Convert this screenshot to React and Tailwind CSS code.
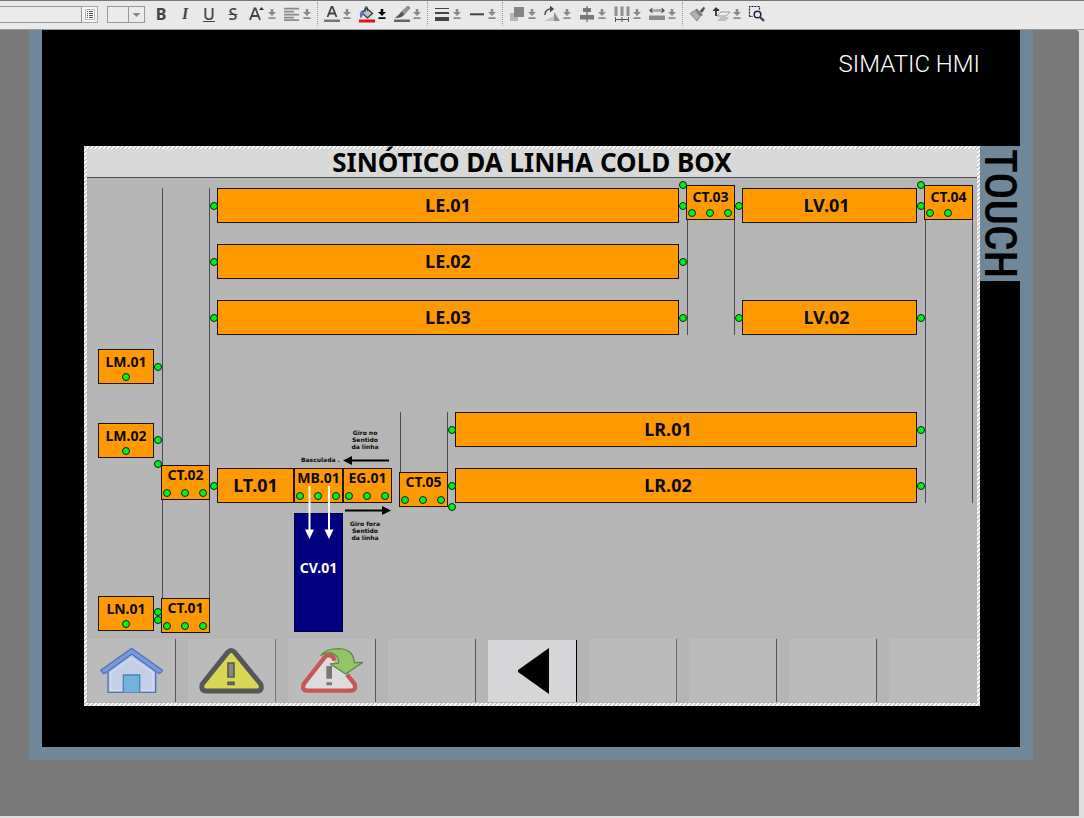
import React from "react";

const SMALL = "text-[14px] leading-[16px]";

const rails = [
  "left-[75px] top-[10px] h-[420px]",
  "left-[600px] top-[7px] h-[150px]",
  "left-[838px] top-[7px] h-[318px]",
  "left-[313px] top-[234px] h-[90px]",
];

const conveyors = [
  { name: "LE.01", at: "left-[130px] top-[10px] w-[462px]" },
  { name: "LE.02", at: "left-[130px] top-[66px] w-[462px]" },
  { name: "LE.03", at: "left-[130px] top-[122px] w-[462px]" },
  { name: "LV.01", at: "left-[655px] top-[10px] w-[175px] pr-[6px]" },
  { name: "LV.02", at: "left-[655px] top-[122px] w-[175px] pr-[6px]" },
  { name: "LR.01", at: "left-[368px] top-[234px] w-[462px] pr-[36px]" },
  { name: "LR.02", at: "left-[368px] top-[290px] w-[462px] pr-[36px]" },
  { name: "LT.01", at: "left-[130px] top-[290px] w-[77px]" },
];

const stations = [
  { name: "CT.03", dots: 3, at: "left-[599px] top-[7px] w-[49px] pt-[3px]" },
  { name: "CT.04", dots: 2, at: "left-[837px] top-[7px] w-[49px] pt-[3px]" },
  { name: "LM.01", dots: 1, at: "left-[11px] top-[171px] w-[56px] pt-[4px]" },
  { name: "LM.02", dots: 1, at: "left-[11px] top-[245px] w-[56px] pt-[4px]" },
  { name: "LN.01", dots: 1, at: "left-[11px] top-[418px] w-[56px] pt-[4px]" },
  { name: "CT.02", dots: 3, at: "left-[74px] top-[287px] w-[49px] pt-[1px]" },
  { name: "CT.01", dots: 3, at: "left-[74px] top-[420px] w-[49px] pt-[1px]" },
  { name: "MB.01", dots: 3, at: "left-[207px] top-[290px] w-[49px] pt-[1px]" },
  { name: "EG.01", dots: 3, at: "left-[256px] top-[290px] w-[49px] pt-[1px]" },
  { name: "CT.05", dots: 3, at: "left-[312px] top-[294px] w-[49px] pt-[1px]" },
];

const sensors = [
  "left-[123px] top-[24px]",
  "left-[123px] top-[80px]",
  "left-[123px] top-[136px]",
  "left-[592px] top-[3px]",
  "left-[592px] top-[24px]",
  "left-[592px] top-[80px]",
  "left-[592px] top-[136px]",
  "left-[648px] top-[24px]",
  "left-[648px] top-[136px]",
  "left-[830px] top-[3px]",
  "left-[830px] top-[24px]",
  "left-[830px] top-[136px]",
  "left-[830px] top-[248px]",
  "left-[830px] top-[304px]",
  "left-[67px] top-[185px]",
  "left-[67px] top-[258px]",
  "left-[67px] top-[282px]",
  "left-[123px] top-[304px]",
  "left-[67px] top-[430px]",
  "left-[67px] top-[438px]",
  "left-[361px] top-[248px]",
  "left-[361px] top-[304px]",
  "left-[361px] top-[325px]",
];

function Dot({ className = "" }) {
  return <span className={`size-2 rounded-full border border-[#062a06] bg-[#06ee1c] ${className}`} />;
}

function Conveyor({ name, at }) {
  return (
    <div className={`absolute flex h-[35px] items-center justify-center border border-[#1c1208] bg-[#ff9900] pb-[2px] text-[18px] leading-[20px] ${at}`}>
      {name}
    </div>
  );
}

function Station({ name, dots, at }) {
  return (
    <div className={`absolute flex h-[35px] flex-col items-center justify-between border border-[#1c1208] bg-[#ff9900] pb-[2px] ${at}`}>
      <span className={SMALL}>{name}</span>
      <span className={dots === 1 ? "flex" : "flex w-full gap-[10px] pl-px"}>
        {Array.from({ length: dots }, (_, i) => (
          <Dot key={i} />
        ))}
      </span>
    </div>
  );
}

function Diagram() {
  return (
    <div className="relative h-[461px] bg-[#b5b5b5] font-bold text-[#0c0804]">
      {rails.map((r) => (
        <div key={r} className={`absolute w-[48px] border-x border-[#4a4a58] ${r}`} />
      ))}
      {conveyors.map((c) => (
        <Conveyor key={c.name} {...c} />
      ))}
      {stations.map((s) => (
        <Station key={s.name} {...s} />
      ))}
      {sensors.map((s) => (
        <Dot key={s} className={`absolute ${s}`} />
      ))}

      <div className={`absolute left-[207px] top-[335px] flex h-[119px] w-[49px] justify-center border border-[#00003a] bg-[#000080] pt-[46px] text-white ${SMALL}`}>
        CV.01
      </div>

      <p className="absolute left-[248px] top-[251px] w-[60px] text-center font-['DejaVu_Sans',sans-serif] text-[6px] leading-[7px]">
        Giro no
        <br />
        Sentido
        <br />
        da linha
      </p>
      <p className="absolute left-[214px] top-[278px] whitespace-nowrap font-['DejaVu_Sans',sans-serif] text-[6px] leading-[7px]">Basculada .</p>
      <p className="absolute left-[248px] top-[342px] w-[60px] text-center font-['DejaVu_Sans',sans-serif] text-[6px] leading-[7px]">
        Giro fora
        <br />
        Sentido
        <br />
        da linha
      </p>

      <svg className="absolute left-[256px] top-[277px]" width="46" height="10" viewBox="0 0 46 10" aria-hidden="true">
        <path d="M8 5.5H46" stroke="#000" strokeWidth="2" />
        <path d="M0 5.5L9 1V10Z" fill="#000" />
      </svg>
      <svg className="absolute left-[258px] top-[327px]" width="46" height="10" viewBox="0 0 46 10" aria-hidden="true">
        <path d="M0 5.5H38" stroke="#000" strokeWidth="2" />
        <path d="M46 5.5L37 1V10Z" fill="#000" />
      </svg>
      <svg className="absolute left-[217px] top-[308px]" width="31" height="54" viewBox="0 0 31 54" aria-hidden="true">
        <path d="M5.5 0V46M25 0V46" stroke="#fff" strokeWidth="2" />
        <path d="M1 43.5H10L5.5 53ZM20.5 43.5H29.5L25 53Z" fill="#fff" />
      </svg>
    </div>
  );
}

function HouseIcon() {
  return (
    <svg width="63" height="47" viewBox="54 57 189 141" aria-hidden="true">
      <path d="M78 130L149 78L221 130V193H78Z" fill="#b7c6e2" stroke="#4e74b4" strokeWidth="4" />
      <path d="M86 134L149 90L213 134V187H86Z" fill="#c2cfe4" stroke="#d5def0" strokeWidth="4" />
      <path d="M124 193V141H173V193" fill="#72b2dc" stroke="#4583b8" strokeWidth="4" />
      <path d="M149 61L242 127L233 137L221 130L149 78L78 130L66 137L56 127Z" fill="#7a9bd8" stroke="#4f78be" strokeWidth="4" strokeLinejoin="round" />
    </svg>
  );
}

function WarningIcon() {
  return (
    <svg width="67" height="47" viewBox="354 57 201 141" aria-hidden="true">
      <path d="M443 73Q453 62 464 73L542 168Q549 189 531 189H379Q361 189 367 168Z" fill="#d9d654" stroke="#575757" strokeWidth="15" strokeLinejoin="round" />
      <path d="M444 105H462V147H444ZM444 163H462V169H444Z" fill="#8a8a7a" stroke="#5a5a58" strokeWidth="5" />
    </svg>
  );
}

function AckIcon() {
  return (
    <svg width="64" height="47" viewBox="660 57 192 141" aria-hidden="true">
      <path d="M745 82L672 173Q668 188 682 188H812Q829 188 825 173L796 136L762 100Z" fill="#dcdcdc" />
      <path d="M763 98Q760 80 745 82Q738 82 734 88L672 167Q663 188 684 188H810Q830 188 824 168L801 140" fill="none" stroke="#c95656" strokeWidth="13" />
      <path d="M739 114H756V152H739ZM739 163H756V172H739Z" fill="#777" />
      <path d="M723 82Q738 62 777 62Q821 64 823 104L848 103L797 138L751 108L776 105Q778 82 752 74Q735 73 723 82Z" fill="#93c566" stroke="#5d8b42" strokeWidth="4" strokeLinejoin="round" />
    </svg>
  );
}

function BackIcon() {
  return (
    <svg width="32" height="46" viewBox="0 0 32 46" aria-hidden="true">
      <path d="M31 0V46L0 24V22Z" fill="#000" />
    </svg>
  );
}

const navButtons = [
  { label: "Início", icon: <HouseIcon />, look: "border-r border-[#555] bg-[#bbbbbb]" },
  { label: "Alarmes", icon: <WarningIcon />, look: "border-r border-[#777] bg-[#bbbbbb]" },
  { label: "Reconhecer alarmes", icon: <AckIcon />, look: "border-r border-[#555] bg-[#bbbbbb]" },
  { label: "F4", look: "border-r border-[#555] bg-[#bbbbbb]" },
  { label: "Voltar", icon: <BackIcon />, look: "mt-px border-r border-black bg-[#d6d6d8] pl-1" },
  { label: "F6", look: "border-r border-[#666] bg-[#bbbbbb]" },
  { label: "F7", look: "border-r border-[#555] bg-[#bbbbbb]" },
  { label: "F8", look: "border-r border-[#555] bg-[#bbbbbb]" },
  { label: "F9", look: "bg-[#bbbbbb]" },
];

function DownMark({ dark }) {
  return (
    <svg width="10" height="14" viewBox="0 0 10 14" aria-hidden="true">
      <path d="M3.7 2H6.3V5H9L5 9L1 5H3.7ZM1.5 10.3H8.5V12H1.5Z" fill={dark ? "#000" : "#8a8a8a"} />
    </svg>
  );
}

function Tool({ label, children, menu = true, dark = false }) {
  return (
    <button type="button" aria-label={label} className="flex h-[22px] items-center">
      <svg width="20" height="20" viewBox="0 0 20 20" aria-hidden="true">
        {children}
      </svg>
      {menu && <DownMark dark={dark} />}
    </button>
  );
}

function Sep() {
  return <span className="-mr-px h-[24px] w-px border-l border-dotted border-[#999]" />;
}

function Toolbar() {
  const txt = "flex h-[22px] w-5 items-center justify-center text-[16px] leading-[20px] text-[#444]";
  return (
    <header className="flex h-[30px] items-center gap-[5px] border-y border-t-[#777] border-b-[#999] bg-[#e9e9e9] pb-[2px] font-['Noto_Sans',sans-serif]">
      <div className="flex h-[17px]">
        <input aria-label="Estilo" className="w-[82px] border border-l-0 border-[#999] bg-[#ebebeb] px-1 text-[11px]" />
        <button type="button" aria-label="Lista de estilos" className="flex w-4 items-center justify-center border border-l-0 border-[#aaa] bg-[#f4f4f4]">
          <svg width="10" height="11" viewBox="0 0 10 11" aria-hidden="true">
            <path d="M0.5 0.5H9.5V10.5H0.5Z" fill="#fff" stroke="#bbb" />
            <path d="M2 2.5H3M4 2.5H8M2 4.5H3M4 4.5H8M2 6.5H3M4 6.5H8M2 8.5H3M4 8.5H8" stroke="#555" />
          </svg>
        </button>
      </div>
      <div className="relative ml-[4px] flex h-[17px] w-[38px]">
        <select aria-label="Tamanho da fonte" className="w-full appearance-none border border-[#999] bg-[#ebebeb]">
          <option></option>
        </select>
        <svg className="pointer-events-none absolute right-0 top-0" width="17" height="17" viewBox="0 0 17 17" aria-hidden="true">
          <path d="M0.5 0V17M0 0.5H17M16.5 0V17M0 16.5H17" stroke="#999" />
          <path d="M4.5 7H12.5L8.5 11Z" fill="#888" />
        </svg>
      </div>
      <div className="flex gap-1 pl-px">
        <button type="button" aria-label="Negrito" className={`${txt} font-bold`}>B</button>
        <button type="button" aria-label="Itálico" className={`${txt} font-['Liberation_Serif',serif] font-bold italic`}>I</button>
        <button type="button" aria-label="Sublinhado" className={`${txt} font-medium underline`}>U</button>
        <button type="button" aria-label="Tachado" className={`${txt} font-medium line-through`}>S</button>
        <Tool label="Tamanho do texto">
          <path d="M3 16L7.5 4.5H8.5L13 16M4.8 12H11.2" fill="none" stroke="#444" strokeWidth="1.8" />
          <path d="M12 6L14.5 3L17 6Z" fill="#333" />
        </Tool>
      </div>
      <Tool label="Alinhamento">
        <path d="M2 4.7H17M2 7.7H12M2 10.7H17M2 13.7H12M2 16.2H17" stroke="#8a8a8a" strokeWidth="1.7" />
      </Tool>
      <Sep />
      <Tool label="Cor do texto">
        <path d="M5.5 13L9.5 3H10.5L14.5 13M7 9.5H13" fill="none" stroke="#444" strokeWidth="1.8" />
        <path d="M2 15.5H18V18H2Z" fill="#777" />
      </Tool>
      <Tool label="Cor de preenchimento" dark>
        <path d="M2 15.5H18V18.5H2Z" fill="#e8101a" />
        <path d="M9.5 4L15.5 9.5L10.5 14L5 9Z" fill="#b8c0d0" stroke="#333" strokeWidth="1.2" />
        <path d="M8 8V3.5Q9 1.5 10.5 3.5V7" fill="none" stroke="#333" />
        <path d="M5.5 6Q1.5 8 3.5 14.5Q6.5 12 6.5 9Z" fill="#5873c8" />
      </Tool>
      <Tool label="Cor da linha">
        <path d="M2 15.5H18V18H2Z" fill="#666" />
        <path d="M16 2L9.5 8L12 10.5L18 4Z" fill="#999" stroke="#666" strokeWidth="0.8" />
        <path d="M9.5 7.5L12.5 10.5Q9 14.5 3 14Q6 12 9.5 7.5Z" fill="#555" />
      </Tool>
      <Sep />
      <Tool label="Espessura da linha">
        <path d="M3 4.5H17" stroke="#444" />
        <path d="M3 9H17" stroke="#444" strokeWidth="2" />
        <path d="M3 15H17" stroke="#444" strokeWidth="4" />
      </Tool>
      <Tool label="Estilo da linha">
        <path d="M3 10.3H17" stroke="#444" strokeWidth="2" />
      </Tool>
      <Sep />
      <Tool label="Ordem">
        <path d="M3 9H11V17H3Z" fill="#b5b5b5" />
        <path d="M7 3H17V13H7Z" fill="#858585" />
      </Tool>
      <Tool label="Girar">
        <path d="M3 11Q3 5 9 5" fill="none" stroke="#555" strokeWidth="1.6" />
        <path d="M8 1.5L12 5L8 8.5Z" fill="#444" />
        <path d="M12 8L18 17H12Z" fill="#8d8d8d" />
        <path d="M2 17L12 12V17Z" fill="#c4c4c4" />
      </Tool>
      <Tool label="Alinhar objetos">
        <path d="M10 2V18" stroke="#444" />
        <path d="M6 4H14V8H6ZM3 11H17V15.5H3Z" fill="#777" />
      </Tool>
      <Tool label="Distribuir">
        <path d="M4 2.5V12M10 2.5V12M16 2.5V12" stroke="#909090" strokeWidth="3" />
        <path d="M3.5 13V18M10 13V18M16.5 13V18M3.5 15.5H16.5" stroke="#555" fill="none" />
      </Tool>
      <Tool label="Ajustar largura">
        <path d="M2 6.5L5.5 3.5V9.5ZM18 6.5L14.5 3.5V9.5Z" fill="#555" />
        <path d="M5 6.5H15" stroke="#aaa" strokeWidth="3" />
        <path d="M2 11.5H18V16H2Z" fill="#8a8a8a" />
      </Tool>
      <Sep />
      <Tool label="Copiar formato" menu={false}>
        <path d="M17 2.5L12.5 7L15 9L18 4.5Z" fill="#555" />
        <path d="M9.5 4.5L16 11L13.5 12.5L8 6Z" fill="#777" />
        <path d="M7.5 6.5L13 12.5L10 17L3 9.5Z" fill="#b0b0b0" stroke="#777" strokeWidth="0.8" />
      </Tool>
      <Tool label="Camadas">
        <path d="M4 12V6M4 6H7" fill="none" stroke="#333" strokeWidth="1.8" />
        <path d="M0.5 7L4 3L7.5 7Z" fill="#333" />
        <path d="M9 8H18L14 12H5Z" fill="#eee" stroke="#999" />
        <path d="M9 13H17L14 17H5Z" fill="#c0c0c0" />
      </Tool>
      <Tool label="Zoom da seleção" menu={false}>
        <path d="M2.5 12.5V2.5H12.5V6M2.5 12.5H6" fill="none" stroke="#111a40" strokeWidth="1.2" strokeDasharray="2 1" />
        <circle cx="10.5" cy="10.5" r="3.3" fill="#dfe6f5" stroke="#223" strokeWidth="1.5" />
        <path d="M13 13L17 17" stroke="#445" strokeWidth="2.4" />
      </Tool>
    </header>
  );
}

export default function App() {
  return (
    <div className="flex min-h-screen flex-col bg-[#dedede]">
      <Toolbar />
      <main className="mb-[2px] mr-[5px] flex-1 rounded-tr-[3px] bg-[#797979] pb-[20px] pl-[29px] pr-[46px]">
        <div className="border-x-[13px] border-b-[13px] border-[#6f8799] bg-black pb-[41px]">
          <div className="flex h-[116px] justify-end pr-10 pt-[18px] font-['Roboto',sans-serif] text-[24px] font-light leading-[32px] text-white">
            SIMATIC HMI
          </div>
          <div className="flex items-start pl-[42px]">
            <section className="min-w-0 flex-1 bg-white bg-[repeating-linear-gradient(135deg,#fff_0px,#fff_1px,#b0b0b0_2px,#fff_3px)] p-[3px] font-['Noto_Sans',sans-serif]">
              <h1 className="flex h-[29px] items-center justify-center border-b border-[#4a4a58] bg-[#d9d9d9] pb-[2px] text-[26px] font-bold leading-[28px] text-black">
                SINÓTICO DA LINHA COLD BOX
              </h1>
              <Diagram />
              <nav aria-label="Teclas de função" className="grid h-[64px] grid-cols-9 gap-3 bg-[#b5b5b5] pb-px pl-px">
                {navButtons.map((b) => (
                  <button key={b.label} type="button" aria-label={b.label} className={`flex items-center justify-center ${b.look}`}>
                    {b.icon}
                  </button>
                ))}
              </nav>
            </section>
            <div className="flex h-[135px] w-10 items-center justify-center bg-[#6f8799] font-['Roboto_Condensed','Liberation_Sans_Narrow',Roboto,sans-serif] text-[45px] font-medium leading-[40px] text-black [writing-mode:vertical-rl]">
              TOUCH
            </div>
          </div>
        </div>
      </main>
    </div>
  );
}
